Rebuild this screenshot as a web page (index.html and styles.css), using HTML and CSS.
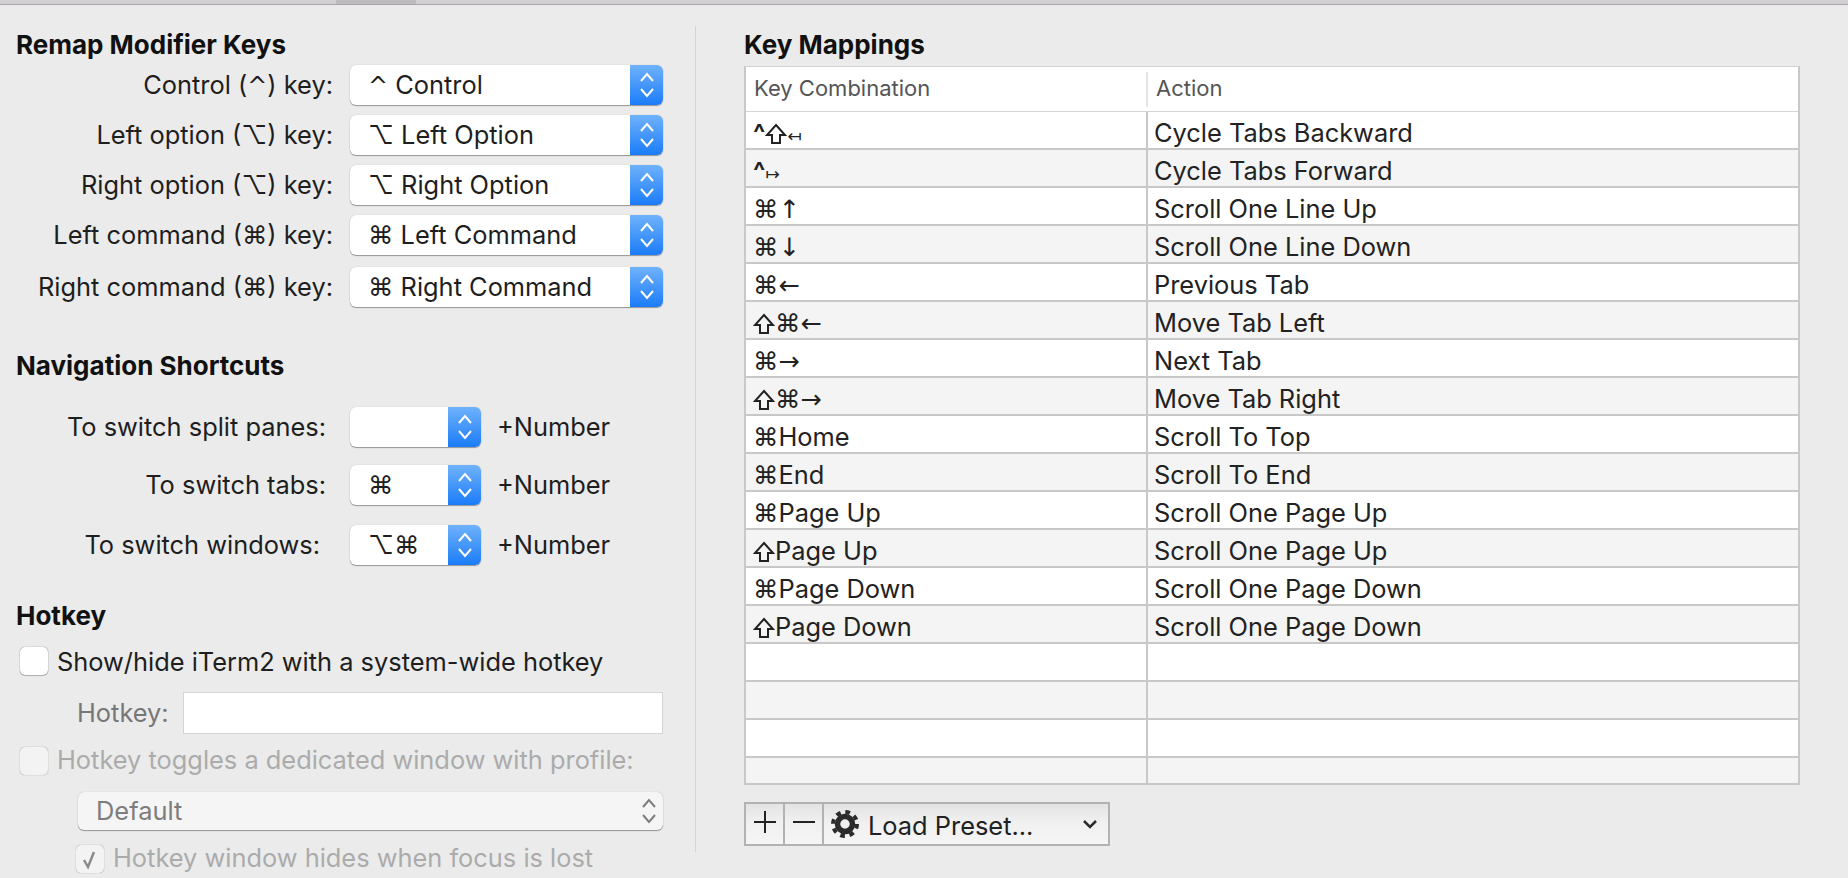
FILE: index.html
```html
<!DOCTYPE html>
<html lang="en">
<head>
    <meta charset="UTF-8">
    <title>Keys</title>
    <link rel="stylesheet" href="styles.css">
</head>
<body>
    <div class="topbar"><div class="tab"></div></div>

    <div class="main">
        <!-- Left column -->
        <div class="left">
            <h2 class="title">Remap Modifier Keys</h2>
            <div class="remap-row">
                <span class="label">Control (<span class="mod">^</span>) key:</span>
                <div class="select wide"><span class="value"><span class="mod">^</span> Control</span><span class="arrows"><svg class="updown" viewBox="0 0 16 28"><path d="M2 10l6-7 6 7M2 18l6 7 6-7"/></svg></span></div>
            </div>
            <div class="remap-row">
                <span class="label">Left option (⌥) key:</span>
                <div class="select wide"><span class="value">⌥ Left Option</span><span class="arrows"><svg class="updown" viewBox="0 0 16 28"><path d="M2 10l6-7 6 7M2 18l6 7 6-7"/></svg></span></div>
            </div>
            <div class="remap-row">
                <span class="label">Right option (⌥) key:</span>
                <div class="select wide"><span class="value">⌥ Right Option</span><span class="arrows"><svg class="updown" viewBox="0 0 16 28"><path d="M2 10l6-7 6 7M2 18l6 7 6-7"/></svg></span></div>
            </div>
            <div class="remap-row">
                <span class="label">Left command (⌘) key:</span>
                <div class="select wide"><span class="value">⌘ Left Command</span><span class="arrows"><svg class="updown" viewBox="0 0 16 28"><path d="M2 10l6-7 6 7M2 18l6 7 6-7"/></svg></span></div>
            </div>
            <div class="remap-row last-remap">
                <span class="label">Right command (⌘) key:</span>
                <div class="select wide"><span class="value">⌘ Right Command</span><span class="arrows"><svg class="updown" viewBox="0 0 16 28"><path d="M2 10l6-7 6 7M2 18l6 7 6-7"/></svg></span></div>
            </div>

            <h2 class="title nav-title">Navigation Shortcuts</h2>
            <div class="nav-row">
                <span class="label nav-label">To switch split panes:</span>
                <div class="select short"><span class="value"></span><span class="arrows"><svg class="updown" viewBox="0 0 16 28"><path d="M2 10l6-7 6 7M2 18l6 7 6-7"/></svg></span></div>
                <span class="number">+Number</span>
            </div>
            <div class="nav-row tabs-row">
                <span class="label nav-label">To switch tabs:</span>
                <div class="select short"><span class="value">⌘</span><span class="arrows"><svg class="updown" viewBox="0 0 16 28"><path d="M2 10l6-7 6 7M2 18l6 7 6-7"/></svg></span></div>
                <span class="number">+Number</span>
            </div>
            <div class="nav-row">
                <span class="label nav-label nudge">To switch windows:</span>
                <div class="select short"><span class="value">⌥⌘</span><span class="arrows"><svg class="updown" viewBox="0 0 16 28"><path d="M2 10l6-7 6 7M2 18l6 7 6-7"/></svg></span></div>
                <span class="number">+Number</span>
            </div>

            <h2 class="title hotkey-title">Hotkey</h2>
            <div class="check-row">
                <span class="checkbox"></span>
                <span>Show/hide iTerm2 with a system-wide hotkey</span>
            </div>
            <div class="hotkey-row">
                <span class="hotkey-label">Hotkey:</span>
                <div class="hotkey-input"></div>
            </div>
            <div class="check-row off profile-row">
                <span class="checkbox"></span>
                <span class="off-text">Hotkey toggles a dedicated window with profile:</span>
            </div>
            <div class="select off-select">
                <span class="value">Default</span>
                <svg class="updown" viewBox="0 0 16 28"><path d="M2 10l6-7 6 7M2 18l6 7 6-7"/></svg>
            </div>
            <div class="check-row off hides-row">
                <span class="checkbox"><svg class="tick" viewBox="0 0 28 28"><path d="M8 15l4 7 6-15"/></svg></span>
                <span class="off-text">Hotkey window hides when focus is lost</span>
            </div>
        </div>

        <div class="divider"></div>

        <!-- Right column -->
        <div class="right">
            <h2 class="title">Key Mappings</h2>
            <div class="table">
                <div class="head">
                    <div class="head-key">Key Combination</div>
                    <div class="head-action">Action</div>
                </div>
                <div class="row"><div class="key"><span class="caret">^</span><svg class="shift" viewBox="0 0 22 22"><path d="M11 2l9 10h-5v8H7v-8H2z"/></svg><span class="small">↤</span></div><div class="action">Cycle Tabs Backward</div></div>
                <div class="row"><div class="key"><span class="caret">^</span><span class="small">↦</span></div><div class="action">Cycle Tabs Forward</div></div>
                <div class="row"><div class="key">⌘<span class="arrow">↑</span></div><div class="action">Scroll One Line Up</div></div>
                <div class="row"><div class="key">⌘<span class="arrow">↓</span></div><div class="action">Scroll One Line Down</div></div>
                <div class="row"><div class="key">⌘<span class="arrow">←</span></div><div class="action">Previous Tab</div></div>
                <div class="row"><div class="key"><svg class="shift" viewBox="0 0 22 22"><path d="M11 2l9 10h-5v8H7v-8H2z"/></svg>⌘<span class="arrow">←</span></div><div class="action">Move Tab Left</div></div>
                <div class="row"><div class="key">⌘<span class="arrow">→</span></div><div class="action">Next Tab</div></div>
                <div class="row"><div class="key"><svg class="shift" viewBox="0 0 22 22"><path d="M11 2l9 10h-5v8H7v-8H2z"/></svg>⌘<span class="arrow">→</span></div><div class="action">Move Tab Right</div></div>
                <div class="row"><div class="key">⌘Home</div><div class="action">Scroll To Top</div></div>
                <div class="row"><div class="key">⌘End</div><div class="action">Scroll To End</div></div>
                <div class="row"><div class="key">⌘Page Up</div><div class="action">Scroll One Page Up</div></div>
                <div class="row"><div class="key"><svg class="shift" viewBox="0 0 22 22"><path d="M11 2l9 10h-5v8H7v-8H2z"/></svg>Page Up</div><div class="action">Scroll One Page Up</div></div>
                <div class="row"><div class="key">⌘Page Down</div><div class="action">Scroll One Page Down</div></div>
                <div class="row"><div class="key"><svg class="shift" viewBox="0 0 22 22"><path d="M11 2l9 10h-5v8H7v-8H2z"/></svg>Page Down</div><div class="action">Scroll One Page Down</div></div>
                <div class="row"><div class="key"></div><div class="action"></div></div>
                <div class="row"><div class="key"></div><div class="action"></div></div>
                <div class="row"><div class="key"></div><div class="action"></div></div>
                <div class="row cut"><div class="key"></div><div class="action"></div></div>
            </div>

            <div class="toolbar">
                <div class="tool-btn">
                    <svg class="tool-icon" viewBox="0 0 24 24"><path d="M12 1v22M1 12h22"/></svg>
                </div>
                <div class="tool-btn">
                    <svg class="tool-icon" viewBox="0 0 24 24"><path d="M1 12h22"/></svg>
                </div>
                <div class="preset">
                    <svg class="gear" viewBox="0 0 28 28">
                        <circle cx="14" cy="14" r="7.5" fill="none" stroke-width="5.5"/>
                        <circle cx="14" cy="14" r="12" fill="none" stroke-width="4" stroke-dasharray="4.7 4.72"/>
                    </svg>
                    <span class="preset-text">Load Preset...</span>
                    <svg class="chevron" viewBox="0 0 14 9"><path d="M1 1l6 6 6-6"/></svg>
                </div>
            </div>
        </div>
    </div>
</body>
</html>
```

FILE: styles.css
```css
* {
    box-sizing: border-box;
}

body {
    margin: 0;
    height: 878px;
    overflow: hidden;
    background-color: #ebebeb;
    font-family: Inter, "DejaVu Sans", sans-serif;
    font-size: 25.4px;
    color: #1e1e1e;
}

/* Barra de cima */
.topbar {
    height: 5px;
    background-color: #d2cfd2;
    border-bottom: 1px solid #a8a8a8;
}

.tab {
    width: 80px;
    height: 4px;
    margin-left: 336px;
    background-color: #bdbbbd;
}

.main {
    display: flex;
    padding-top: 21px;
}

.left {
    width: 695px;
    height: 852px;
    padding: 5px 0 0 16px;
}

.divider {
    width: 1px;
    height: 826px;
    background-color: #d4d4d4;
}

.right {
    width: 1056px;
    margin-left: 48px;
    padding-top: 5px;
}

.title {
    margin: 0 0 6px;
    font-size: 26px;
    line-height: 28px;
    font-weight: 700;
    color: #111;
}

.nav-title {
    margin-top: 45px;
    margin-bottom: 27px;
}

.hotkey-title {
    margin-top: 37px;
    margin-bottom: 17px;
}

/* Linhas de select */
.remap-row,
.nav-row {
    display: flex;
    align-items: center;
}

.remap-row {
    margin-bottom: 10px;
}

.remap-row .label {
    width: 317px;
    margin-right: 17px;
}

.last-remap {
    margin-top: 12px;
    margin-bottom: 0;
}

.nav-row {
    margin-bottom: 18px;
}

.tabs-row {
    margin-bottom: 20px;
}

.label {
    padding-bottom: 2px;
    text-align: right;
    white-space: nowrap;
}

.nav-label {
    width: 310px;
    margin-right: 24px;
}

.nudge {
    padding-right: 6px;
}

.number {
    margin-left: 16px;
    padding-bottom: 2px;
}

.select {
    display: flex;
    align-items: center;
    justify-content: space-between;
    height: 40px;
    background-color: #fff;
    border-radius: 6px;
    box-shadow: 0 1px 1px rgba(0, 0, 0, 0.35), 0 0 1px rgba(0, 0, 0, 0.25);
}

.wide {
    width: 313px;
}

.short {
    width: 131px;
}

.value {
    padding: 0 0 2px 18px;
    white-space: nowrap;
}

.mod {
    font-family: "DejaVu Sans", sans-serif;
    font-size: 24px;
}

.arrows {
    display: flex;
    align-items: center;
    justify-content: center;
    width: 33px;
    height: 100%;
    border-radius: 0 6px 6px 0;
    background: linear-gradient(#6fb2fb, #1b7cf8);
}

.updown {
    width: 16px;
    height: 28px;
    fill: none;
    stroke: #fff;
    stroke-width: 2;
}

/* Hotkey */
.check-row {
    display: flex;
    align-items: center;
    height: 28px;
    padding-left: 4px;
    white-space: nowrap;
}

.checkbox {
    display: flex;
    width: 28px;
    height: 28px;
    margin-right: 9px;
    background-color: #fff;
    border-radius: 5px;
    box-shadow: 0 0 1px rgba(0, 0, 0, 0.7), 0 1px 1px rgba(0, 0, 0, 0.2);
}

.hotkey-row {
    display: flex;
    align-items: center;
    margin-top: 17px;
    padding-left: 61px;
}

.hotkey-label {
    width: 106px;
    padding-bottom: 2px;
    color: #777;
}

.hotkey-input {
    width: 480px;
    height: 42px;
    background-color: #fff;
    border: 1px solid #d4d4d4;
}

.off {
    color: #ababab;
}

.off-text {
    padding-bottom: 3px;
}

.off .checkbox {
    background-color: #f3f3f3;
    box-shadow: 0 0 1px rgba(0, 0, 0, 0.5);
}

.profile-row {
    margin-top: 13px;
}

.off-select {
    width: 585px;
    height: 38px;
    margin-top: 17px;
    margin-left: 62px;
    padding-right: 6px;
    background-color: #f5f5f5;
    color: #7d7d7d;
}

.off-select .updown {
    stroke: #7d7d7d;
}

.hides-row {
    margin-top: 15px;
    padding-left: 60px;
}

.tick {
    width: 28px;
    height: 28px;
    fill: none;
    stroke: #8a8a8a;
    stroke-width: 2.5;
}

/* Tabela */
.table {
    height: 719px;
    margin-top: 7px;
    background-color: #fff;
    border-top: 1px solid #d2d2d2;
    border-left: 2px solid #c8c8c8;
    border-right: 2px solid #c8c8c8;
    border-bottom: 2px solid #c8c8c8;
}

.head {
    display: flex;
    align-items: center;
    height: 45px;
    border-bottom: 1px solid #d4d4d4;
    font-size: 22px;
    color: #555;
}

.head-key {
    width: 402px;
    height: 35px;
    padding-left: 8px;
    line-height: 33px;
    border-right: 2px solid #e4e4e4;
}

.head-action {
    padding: 0 0 2px 8px;
}

.row {
    display: flex;
    height: 38px;
    border-bottom: 2px solid #c8c8c8;
    line-height: 38px;
    color: #222;
}

.row:nth-child(odd) {
    background-color: #f4f4f4;
}

.cut {
    height: 25px;
    border-bottom: 0;
}

.key {
    width: 402px;
    padding: 2px 0 0 7px;
    border-right: 2px solid #c8c8c8;
    white-space: nowrap;
}

.action {
    padding: 2px 0 0 6px;
    white-space: nowrap;
}

.caret {
    font-weight: 700;
}

.small {
    font-size: 17px;
}

.arrow {
    font-family: "DejaVu Sans", sans-serif;
}

.shift {
    width: 22px;
    height: 22px;
    vertical-align: -3px;
    fill: none;
    stroke: #222;
    stroke-width: 2;
}

/* Botoes de baixo */
.toolbar {
    display: flex;
    width: 366px;
    height: 44px;
    margin-top: 17px;
    background: linear-gradient(#e3e3e3, #f0f0f0 45%, #f5f5f5);
    border: 2px solid #b2b2b2;
}

.tool-btn {
    display: flex;
    align-items: center;
    justify-content: center;
    width: 39px;
    border-right: 2px solid #b2b2b2;
}

.tool-icon {
    width: 24px;
    height: 24px;
    margin-top: -4px;
    fill: none;
    stroke: #222;
    stroke-width: 2;
}

.preset {
    display: flex;
    align-items: center;
    flex: 1;
    padding-left: 7px;
}

.gear {
    width: 28px;
    height: 28px;
    stroke: #2b2b2b;
}

.preset-text {
    margin: 3px 0 0 9px;
    color: #222;
}

.chevron {
    width: 14px;
    height: 9px;
    margin-left: auto;
    margin-right: 11px;
    fill: none;
    stroke: #2b2b2b;
    stroke-width: 2.5;
}
```
